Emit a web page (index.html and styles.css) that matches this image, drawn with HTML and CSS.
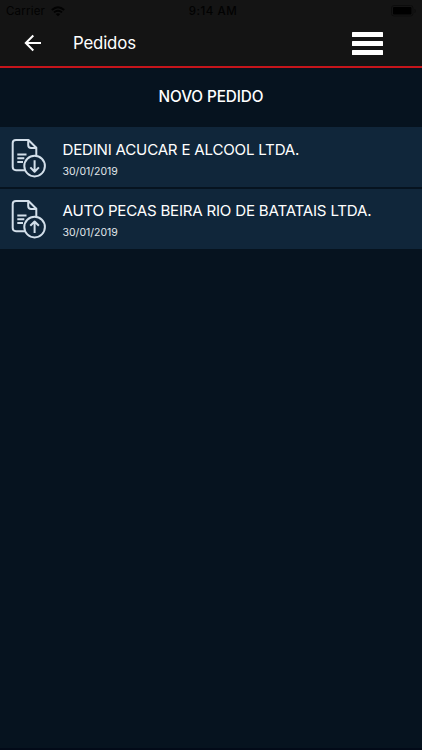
FILE: index.html
```html
<!DOCTYPE html>
<html lang="pt-BR">
<head>
<meta charset="utf-8">
<meta name="viewport" content="width=device-width, initial-scale=1">
<title>Pedidos</title>
<link rel="stylesheet" href="styles.css">
</head>
<body>
<div class="app">
  <header class="header">
    <div class="status">
      <div class="carrier"><span>Carrier</span>
        <svg class="wifi" width="14" height="11" viewBox="0 0 14 11" fill="none" stroke="currentColor" stroke-width="1.9"><path d="M.8 4Q7-1.7 13.2 4M3 6.4q4-3.4 8 0"/><path d="M7 10.2 4.8 8.1Q7 6.5 9.2 8.1Z" fill="currentColor" stroke="none"/></svg>
      </div>
      <div class="time">9:14 AM</div>
      <svg class="battery" width="25" height="12" viewBox="0 0 25 12"><rect x=".5" y=".5" width="21.5" height="10.5" rx="2.5" fill="none" stroke="#0c0c0c"/><rect x="2" y="2" width="18.5" height="7.5" rx="1" fill="#000"/><path d="M23.5 4v4q1.3-.6 1.3-2T23.5 4" fill="#0c0c0c"/></svg>
    </div>
    <nav class="bar">
      <svg class="back" width="18" height="18" viewBox="0 0 18 18" fill="none" stroke="#fff" stroke-width="2"><path d="M17 9H2M9.3 1.5 1.8 9l7.5 7.5"/></svg>
      <h1 class="title">Pedidos</h1>
      <div class="menu"><i></i><i></i><i></i></div>
    </nav>
  </header>
  <button class="new">NOVO PEDIDO</button>
  <main class="list">
    <article class="row">
      <svg class="doc" width="36" height="40" viewBox="0 0 36 40" fill="none" stroke="#d3dfea" stroke-width="2" stroke-linejoin="round"><path d="M14 31.2H5Q1.7 31.2 1.7 28V4Q1.7 1 5 1H17.5L25.3 8.8V16.5M17.2 1V6Q17.2 9 20.2 9H25.3M6.3 15.5H15.5M6.3 19.3H13.3M6.3 23.1H12"/><circle cx="23.6" cy="27.1" r="10.3"/><path d="M23.6 21.2V32.5M19.3 28.4l4.3 4.3 4.3-4.3"/></svg>
      <div class="info"><h2 class="name">DEDINI ACUCAR E ALCOOL LTDA.</h2><time class="date">30/01/2019</time></div>
    </article>
    <article class="row">
      <svg class="doc" width="36" height="40" viewBox="0 0 36 40" fill="none" stroke="#d3dfea" stroke-width="2" stroke-linejoin="round"><path d="M14 31.2H5Q1.7 31.2 1.7 28V4Q1.7 1 5 1H17.5L25.3 8.8V16.5M17.2 1V6Q17.2 9 20.2 9H25.3M6.3 15.5H15.5M6.3 19.3H13.3M6.3 23.1H12"/><circle cx="23.6" cy="27.1" r="10.3"/><path d="M23.6 33V21.7M19.3 25.8l4.3-4.3 4.3 4.3"/></svg>
      <div class="info"><h2 class="name">AUTO PECAS BEIRA RIO DE BATATAIS LTDA.</h2><time class="date">30/01/2019</time></div>
    </article>
  </main>
</div>
</body>
</html>
```

FILE: styles.css
```css
* { box-sizing: border-box; margin: 0; padding: 0; }
body { background: #06131f; font-family: Inter, "Liberation Sans", sans-serif; color: #fff; }
.app { height: 750px; display: flex; flex-direction: column; border-bottom: 2px solid #020a18; overflow: hidden; }
.header { height: 68px; background: #141414; border-bottom: 2px solid #c6151b; flex: none; }
.status { height: 22px; display: grid; grid-template-columns: 1fr auto 1fr; align-items: center; padding: 0 6px; color: #020202; font-size: 11.5px; line-height: 22px; }
.carrier { display: flex; align-items: center; gap: 6px; letter-spacing: .2px; }
.time { font-weight: 500; letter-spacing: .55px; padding-left: 4px; }
.battery { justify-self: end; }
.bar { height: 42px; display: flex; align-items: center; padding: 0 39px 0 24px; }
.back { margin-right: 31px; }
.title { font-size: 16.8px; font-weight: 400; line-height: 22px; letter-spacing: -.16px; }
.menu { margin-left: auto; width: 31px; display: flex; flex-direction: column; gap: 4px; }
.menu i { height: 5px; background: #fff; border-radius: .5px; }
.new { height: 58.5px; border: 0; background: none; color: #fff; font: 500 15.3px/56px Inter, sans-serif; letter-spacing: -.1px; flex: none; }
.list { display: flex; flex-direction: column; gap: 2px; }
.row { height: 60px; background: #10263a; display: flex; padding: 12.4px 0 0 11px; }
.row + .row { padding-top: 11px; }
.doc { flex: none; margin-right: 15.5px; }
.info { padding-top: 1px; }
.name { font-size: 15.1px; font-weight: 400; line-height: 20px; letter-spacing: -.21px; white-space: nowrap; }
.date { display: block; font-size: 10.5px; line-height: 14px; margin-top: 5px; color: #e0e6eb; }
```
